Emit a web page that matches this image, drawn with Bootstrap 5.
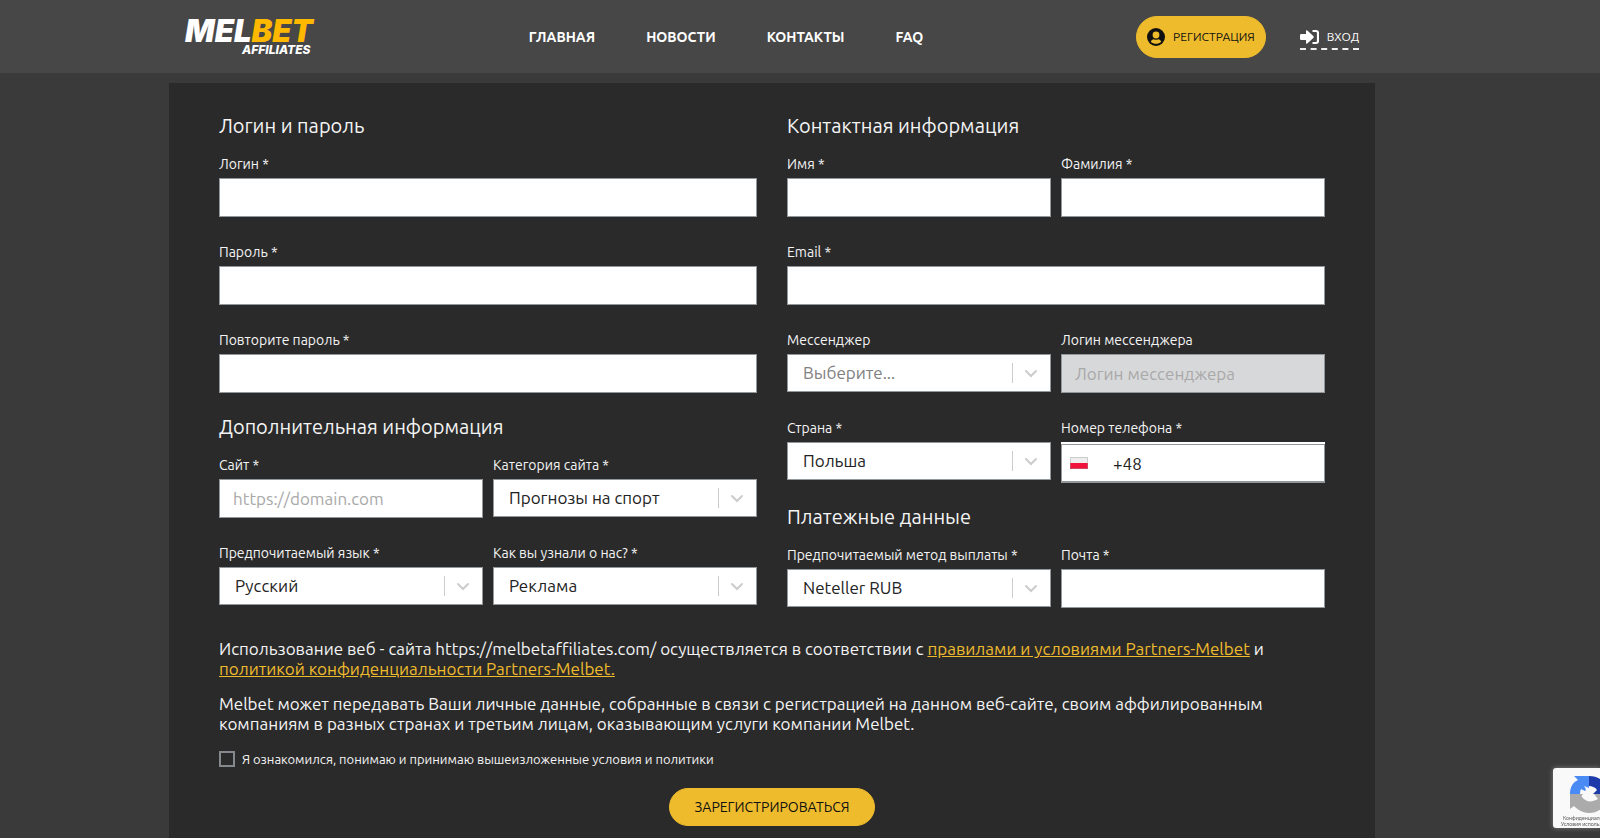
<!DOCTYPE html>
<html lang="ru">
<head>
<meta charset="utf-8">
<meta name="viewport" content="width=device-width, initial-scale=1">
<title>Melbet Affiliates</title>
<link rel="stylesheet" href="https://cdn.jsdelivr.net/npm/bootstrap@5.3.0/dist/css/bootstrap.min.css">
<style>
  :root { --brand: #eebb2d; --panel: #2a2a2a; }
  body { font-family: Ubuntu, "Noto Sans", sans-serif; font-size: 16px; line-height: 20px; background: #3a3a3a; color: #f4f4f4; overflow-x: hidden; }
  .site-head { background: #474747; }
  .head-bar { min-height: 73px; }
  .shell { max-width: 1206px; margin: 0 auto; }
  @media (min-width: 1400px) { .head-bar, .site-main { padding-right: 56px; } }
  .logo { width: 131px; height: 48px; }
  .logo text { font-family: Inter, sans-serif; font-style: italic; }
  .main-nav { gap: 8px 51px; font-size: 14px; font-weight: 700; }
  .main-nav a, .login-link { color: #fff; text-decoration: none; }
  .btn-brand { --bs-btn-bg: var(--brand); --bs-btn-border-color: var(--brand); --bs-btn-color: #111; --bs-btn-hover-bg: #ffcb3a; --bs-btn-hover-border-color: #ffcb3a; --bs-btn-hover-color: #111; --bs-btn-padding-y: 8px; --bs-btn-line-height: 20px; }
  .btn-join { --bs-btn-font-size: 12px; --bs-btn-padding-x: 10px; --bs-btn-padding-y: 10px; }
  .btn-send { --bs-btn-font-size: 14px; --bs-btn-padding-x: 24px; }
  .head-actions { gap: 34px; }
  .login-link { font-size: 12px; line-height: 22px; border-bottom: 2px dashed #f0f0f0; padding-top: 3px; }
  .panel { background: var(--panel); padding: 29px 50px 12px; margin-top: 10px; min-height: calc(100vh - 83px); }
  .form-cols { display: grid; grid-template-columns: 1fr 1fr; gap: 20px 30px; }
  .pair { display: grid; grid-template-columns: 1fr 1fr; gap: 25px 10px; }
  .wide { grid-column: 1 / -1; }
  .group-title { font-size: 20px; line-height: 28px; font-weight: 400; margin: 0 0 14px; }
  .stack { display: flex; flex-direction: column; gap: 20px; }
  .form-label { display: block; font-size: 14px; line-height: 20px; margin: 0 0 4px; }
  .form-control, .form-select { border: 1px solid #92979b; border-radius: 0; font-size: 17px; line-height: 20px; color: #222; background-color: #fff; }
  .form-control { height: 39px; padding: 8px 13px; }
  .form-control::placeholder { color: #a9a9a9; }
  .form-control:disabled { background: #d7d8da; }
  .form-select { height: 38px; padding: 8px 42px 8px 15px; background-size: 38px 20px; background-position: right center; background-image: url("data:image/svg+xml,%3Csvg xmlns='http://www.w3.org/2000/svg' viewBox='0 0 38 20'%3E%3Cpath d='M.5 0v20' stroke='%23ccc'/%3E%3Cpath d='M14 8l5 5 5-5' fill='none' stroke='%23ccc' stroke-width='2' stroke-linecap='round'/%3E%3C/svg%3E"); }
  .form-select.is-blank { color: #808080; }
  .phone { height: 41px; background: #fff; padding-top: 2px; }
  .phone-row { height: 39px; border: 1px solid #92979b; border-bottom-width: 2px; padding-left: 8px; gap: 13px; }
  .phone .form-control { border: 0; height: 36px; padding: 8px 12px; background: transparent; }
  .legal { margin: 31px 0 0; }
  .legal p { margin: 0 0 15px; font-size: 17px; }
  .legal a { color: var(--brand); }
  .agree { gap: 7px; min-height: 0; padding: 0; margin: 0; font-size: 13px; }
  .agree .form-check-input { width: 16px; height: 16px; margin: 0; float: none; border: 2px solid #85898d; border-radius: 0; background-color: transparent; }
  .send-row { margin-top: 19px; }
  .captcha { position: fixed; right: 0; bottom: 10px; width: 47px; height: 60px; overflow: hidden; border-radius: 3px 0 0 3px; background: #f9f9f9; box-shadow: 0 0 5px #808080; }
  .captcha svg { display: block; }
</style>
</head>
<body>
<header class="site-head">
  <div class="head-bar d-flex align-items-center">
    <div class="shell w-100 d-flex flex-wrap align-items-center justify-content-between px-3">
      <a href="#" aria-label="Melbet Affiliates">
        <svg class="logo d-block overflow-visible" viewBox="0 0 131 48">
          <text x="0" y="29" font-size="31" font-weight="900" fill="#fff">MEL<tspan fill="#ffb800">BET</tspan></text>
          <text x="57" y="41" font-size="12" font-weight="800" fill="#fff">AFFILIATES</text>
        </svg>
      </a>
      <nav class="main-nav d-flex flex-wrap">
        <a href="#">ГЛАВНАЯ</a><a href="#">НОВОСТИ</a><a href="#">КОНТАКТЫ</a><a href="#">FAQ</a>
      </nav>
      <div class="head-actions d-flex align-items-center">
        <button type="button" class="btn btn-brand btn-join rounded-pill d-flex align-items-center gap-2">
          <svg width="18" height="18" viewBox="0 0 18 18" aria-hidden="true"><circle cx="9" cy="9" r="9" fill="#111"/><circle cx="9" cy="7" r="3.400" fill="#eebb2d"/><path d="M3.800 13.800c.6-1.600 1.600-2.600 3-2.600 1.300.7 3.100.7 4.400 0 1.400 0 2.400 1 3 2.600-2.800 2.700-7.600 2.700-10.400 0z" fill="#eebb2d"/></svg>
          РЕГИСТРАЦИЯ
        </button>
        <a href="#" class="login-link d-flex align-items-center gap-2">
          <svg width="19" height="20" viewBox="0 0 19 20" aria-hidden="true"><path d="M0 8.200Q0 7 1.200 7H6V4.200q0-1.700 1.300-.6l6 5.500q1 .9 0 1.800l-6 5.500Q6 17.500 6 15.800V13H1.200Q0 13 0 11.800z" fill="#fff"/><path d="M12.500 4H16q2 0 2 2v8q0 2-2 2h-3.500" fill="none" stroke="#fff" stroke-width="2.200"/></svg>
          ВХОД
        </a>
      </div>
    </div>
  </div>
</header>

<main class="site-main">
  <form class="shell panel">
    <div class="form-cols">
      <div class="stack">
        <section>
          <h2 class="group-title">Логин и пароль</h2>
          <div class="pair">
            <div class="wide"><label class="form-label" for="login">Логин *</label><input id="login" class="form-control" type="text"></div>
            <div class="wide"><label class="form-label" for="pass">Пароль *</label><input id="pass" class="form-control" type="password"></div>
            <div class="wide"><label class="form-label" for="pass2">Повторите пароль *</label><input id="pass2" class="form-control" type="password"></div>
          </div>
        </section>
        <section>
          <h2 class="group-title">Дополнительная информация</h2>
          <div class="pair">
            <div><label class="form-label" for="site">Сайт *</label><input id="site" class="form-control" type="url" placeholder="https://domain.com"></div>
            <div><label class="form-label" for="cat">Категория сайта *</label><select id="cat" class="form-select"><option>Прогнозы на спорт</option></select></div>
            <div><label class="form-label" for="lang">Предпочитаемый язык *</label><select id="lang" class="form-select"><option>Русский</option></select></div>
            <div><label class="form-label" for="source">Как вы узнали о нас? *</label><select id="source" class="form-select"><option>Реклама</option></select></div>
          </div>
        </section>
      </div>
      <div class="stack">
        <section>
          <h2 class="group-title">Контактная информация</h2>
          <div class="pair">
            <div><label class="form-label" for="fname">Имя *</label><input id="fname" class="form-control" type="text"></div>
            <div><label class="form-label" for="lname">Фамилия *</label><input id="lname" class="form-control" type="text"></div>
            <div class="wide"><label class="form-label" for="email">Email *</label><input id="email" class="form-control" type="email"></div>
            <div><label class="form-label" for="msg">Мессенджер</label><select id="msg" class="form-select is-blank"><option>Выберите...</option></select></div>
            <div><label class="form-label" for="msglogin">Логин мессенджера</label><input id="msglogin" class="form-control" type="text" placeholder="Логин мессенджера" disabled></div>
            <div><label class="form-label" for="country">Страна *</label><select id="country" class="form-select"><option>Польша</option></select></div>
            <div><label class="form-label" for="phone">Номер телефона *</label>
              <div class="phone"><div class="phone-row d-flex align-items-center">
                <svg class="flex-shrink-0" width="18" height="12" viewBox="0 0 18 12" aria-hidden="true"><path d="M0 0h18v12H0z" fill="#eee"/><path d="M0 6h18v6H0z" fill="#f0143c"/><path d="M.5.5h17v11H.5z" fill="none" stroke="#999" stroke-opacity=".4"/></svg>
                <input id="phone" class="form-control" type="tel" value="+48">
              </div></div>
            </div>
          </div>
        </section>
        <section>
          <h2 class="group-title">Платежные данные</h2>
          <div class="pair">
            <div><label class="form-label" for="pay">Предпочитаемый метод выплаты *</label><select id="pay" class="form-select"><option>Neteller RUB</option></select></div>
            <div><label class="form-label" for="mail">Почта *</label><input id="mail" class="form-control" type="text"></div>
          </div>
        </section>
      </div>
    </div>
    <div class="legal">
      <p>Использование веб - сайта https://melbetaffiliates.com/ осуществляется в соответствии с <a href="#">правилами и условиями Partners-Melbet</a> и <a href="#">политикой конфиденциальности Partners-Melbet.</a></p>
      <p>Melbet может передавать Ваши личные данные, собранные в связи с регистрацией на данном веб-сайте, своим аффилированным компаниям в разных странах и третьим лицам, оказывающим услуги компании Melbet.</p>
    </div>
    <div class="form-check agree d-flex align-items-center">
      <input class="form-check-input" type="checkbox" id="agree">
      <label for="agree">Я ознакомился, понимаю и принимаю вышеизложенные условия и политики</label>
    </div>
    <div class="send-row text-center">
      <button type="submit" class="btn btn-brand btn-send rounded-pill">ЗАРЕГИСТРИРОВАТЬСЯ</button>
    </div>
  </form>
</main>

<aside class="captcha" aria-label="reCAPTCHA">
  <svg width="70" height="60" viewBox="0 0 70 60">
    <path d="M17 26C17 19 20 14 25 12L21 8H36V20L31 18Q34 22 32 23L28 21Q27 23 27 26z" fill="#4a8af4"/>
    <path d="M36 8c7 0 12 3 15 6l4-3v15H40l4-4c-2-3-5-4-8-4z" fill="#1c3aa9"/>
    <path d="M17 26h13q-2 2-1 3c4 5 9 6 16 2l-4-5h14c0 11-8 19-19 19-6 0-11-3-15-7l-4 3z" fill="#ababab"/>
    <g font-family="Noto Sans, sans-serif" font-size="5" fill="#555"><text x="10" y="52">Конфиденциальность</text><text x="8" y="58">Условия использования</text></g>
  </svg>
</aside>
<script src="https://cdn.jsdelivr.net/npm/bootstrap@5.3.0/dist/js/bootstrap.bundle.min.js"></script>
</body>
</html>
